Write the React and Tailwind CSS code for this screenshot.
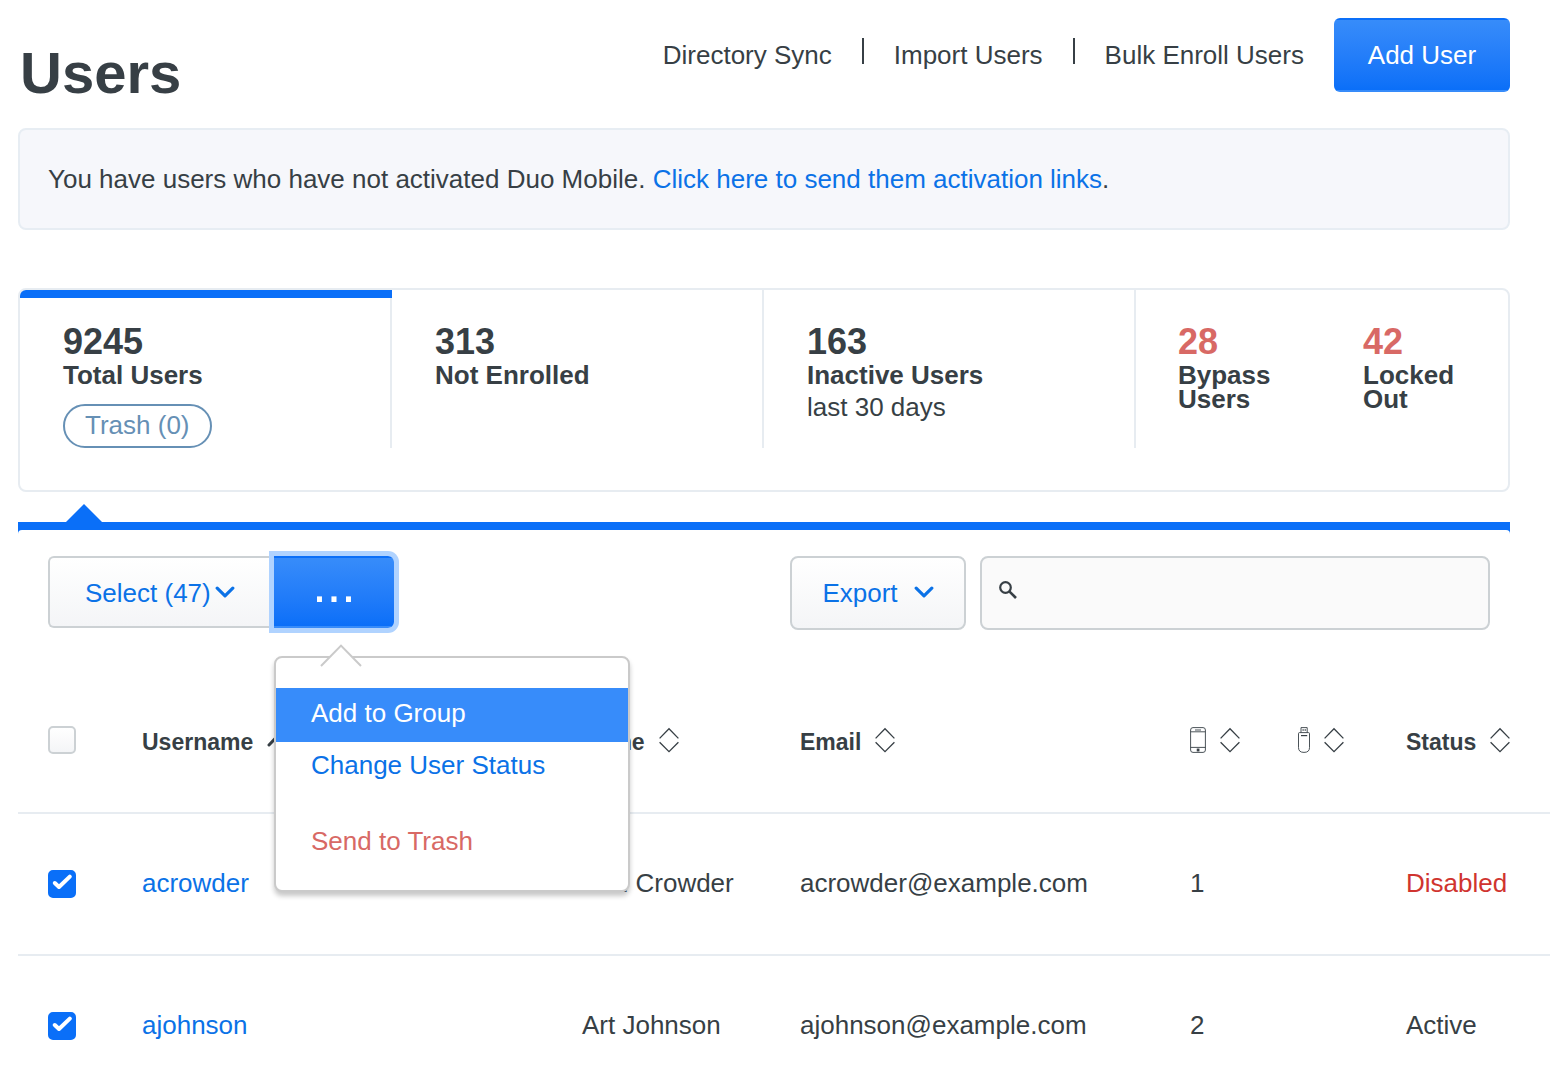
import React, { useState } from 'react';

const USERS = [
    { username: 'acrowder', name: 'Ann Crowder', email: 'acrowder@example.com', phones: 1, status: 'Disabled' },
    { username: 'ajohnson', name: 'Art Johnson', email: 'ajohnson@example.com', phones: 2, status: 'Active' },
];

const Chevron = () => (
    <svg width="20" height="14" viewBox="0 0 20 14" fill="none" stroke="currentColor" strokeWidth="3.2" strokeLinecap="round" strokeLinejoin="round" aria-hidden="true">
        <path d="M2.2 2.2 L10 9.8 L17.8 2.2" />
    </svg>
);

const SortIcon = () => (
    <svg width="20" height="26" viewBox="0 0 20 26" fill="none" stroke="currentColor" strokeWidth="1.3" aria-hidden="true">
        <path d="M0.6 11.4 L10 1.8 L19.4 11.4 M0.6 15.2 L10 24.6 L19.4 15.2" />
    </svg>
);

const SortUpIcon = () => (
    <svg width="20" height="16" viewBox="0 0 20 16" fill="none" stroke="currentColor" strokeWidth="3" strokeLinecap="round" strokeLinejoin="round" aria-hidden="true">
        <path d="M2 13 L10 4.6 L18 13" />
    </svg>
);

const PhoneIcon = () => (
    <svg width="16" height="26" viewBox="0 0 16 26" fill="none" stroke="currentColor" strokeWidth="0.9" aria-hidden="true">
        <rect x="0.6" y="0.6" width="14.8" height="24.8" rx="2.4" />
        <path d="M0.6 4.8 H15.4 M0.6 20.4 H15.4 M5 3 H11" />
        <rect x="7.2" y="22" width="1.8" height="2" fill="currentColor" />
    </svg>
);

const TokenIcon = () => (
    <svg className="ml-0.5" width="12" height="26" viewBox="0 0 12 26" fill="none" stroke="currentColor" strokeWidth="0.9" aria-hidden="true">
        <path d="M3 5.6 V0.6 H9.2 V5.6 M5.1 2 V4 M7.2 2 V4" />
        <path d="M1.4 5.6 H10.6 Q11.5 5.6 11.5 6.6 V20.6 Q11.5 25.4 6 25.4 Q0.5 25.4 0.5 20.6 V6.6 Q0.5 5.6 1.4 5.6 Z" />
        <path d="M3 8.6 H9.2" strokeWidth="1.2" />
    </svg>
);

const Checkbox = ({ label, checked, onChange }) => (
    <label className="grid w-7">
        <input
            type="checkbox"
            aria-label={label}
            checked={checked}
            onChange={onChange}
            className="peer col-start-1 row-start-1 size-7 appearance-none rounded-[5px] border-2 border-[#ccd1d4] bg-linear-to-b from-white to-[#f4f5f7] checked:border-[#0a6ff8] checked:from-[#0a6ff8] checked:to-[#0a6ff8]"
        />
        <svg className="invisible pointer-events-none col-start-1 row-start-1 size-7 text-white peer-checked:visible" viewBox="0 0 28 28" fill="none" stroke="currentColor" strokeWidth="4" strokeLinecap="round" strokeLinejoin="round" aria-hidden="true">
            <path d="M6.8 13 L11 17 L21.8 6.6" />
        </svg>
    </label>
);

const Stat = ({ value, label, danger, children }) => (
    <div>
        <div className={`text-4xl leading-[42px] font-bold ${danger ? 'text-[#d86965]' : ''}`}>{value}</div>
        <div className="leading-6 font-bold">{label}</div>
        {children}
    </div>
);

const SortableHeader = ({ children, label }) => (
    <th scope="col" className="p-0 text-left">
        <button type="button" aria-label={label} className="flex items-center gap-3.5 text-[23px] font-bold">
            {label ? children : <span className="pt-1">{children}</span>}
            <SortIcon />
        </button>
    </th>
);

const App = () => {
    const [selected, setSelected] = useState(['acrowder', 'ajohnson']);
    const [search, setSearch] = useState('');

    const toggle = (username) => {
        setSelected(prev => prev.includes(username) ? prev.filter(u => u !== username) : [...prev, username]);
    };

    return (
        <div className="overflow-x-hidden bg-white pl-[18px] font-['Liberation_Sans',Arial,sans-serif] text-[26px] leading-[30px] text-[#373f45]">
            <div className="pr-10">
                <header className="flex items-start justify-between pt-[18px]">
                    <h1 className="pt-[26px] pb-[26px] pl-0.5 text-[58px] leading-[58px] font-bold">Users</h1>
                    <nav className="flex h-[74px] items-center gap-[30px]">
                        <a href="#sync">Directory Sync</a>
                        <span className="mb-2 h-[26px] w-0.5 bg-[#373f45]" />
                        <a href="#import">Import Users</a>
                        <span className="mb-2 h-[26px] w-0.5 bg-[#373f45]" />
                        <a href="#bulk">Bulk Enroll Users</a>
                        <button type="button" className="h-full w-44 rounded-md border-2 border-transparent bg-linear-to-b from-[#378cfa] to-[#0a6ff8] text-white">
                            Add User
                        </button>
                    </nav>
                </header>

                <div className="rounded-lg border-2 border-[#e7edf3] bg-[#f6f7fb] px-7 py-[34px]">
                    You have users who have not activated Duo Mobile.{' '}
                    <a href="#activate" className="text-[#0b72e7]">Click here to send them activation links</a>.
                </div>

                <section className="mt-[58px] grid grid-cols-4 rounded-lg border-2 border-[#e7ecf1] pb-[42px]">
                    <div className="relative border-r-2 border-[#e7ecf1] pt-[31px] pl-[43px]">
                        <div className="absolute top-0 left-0 -right-0.5 h-2 rounded-tl-md bg-[#0a6ff8]" />
                        <Stat value="9245" label="Total Users">
                            <button type="button" className="mt-[17px] h-11 rounded-full border-2 border-[#6690b5] px-5 pb-0.5 text-[#6690b5]">Trash (0)</button>
                        </Stat>
                    </div>
                    <div className="border-r-2 border-[#e7ecf1] pt-[31px] pl-[43px]">
                        <Stat value="313" label="Not Enrolled" />
                    </div>
                    <div className="border-r-2 border-[#e7ecf1] pt-[31px] pl-[43px]">
                        <Stat value="163" label="Inactive Users">
                            <div className="mt-1 leading-8">last 30 days</div>
                        </Stat>
                    </div>
                    <div className="grid grid-cols-2 gap-10 pt-[31px] pl-[42px]">
                        <Stat value="28" label={<>Bypass<br />Users</>} danger />
                        <Stat value="42" label={<>Locked<br />Out</>} danger />
                    </div>
                </section>

                <svg className="mt-3 ml-12 block text-[#0a6ff8]" width="36" height="18" viewBox="0 0 36 18" fill="currentColor" aria-hidden="true">
                    <path d="M0 18 L18 0 L36 18 Z" />
                </svg>
                <div className="bg-[#0a6ff8] pt-2">
                    <div className="flex items-start justify-between rounded-t bg-white pt-[26px] pr-5 pb-[38px] pl-[30px]">
                        <div className="relative flex h-[72px]">
                            <button type="button" className="flex w-[226px] items-center gap-1 rounded-l-md border-2 border-r-0 border-[#ccd1d4] bg-linear-to-b from-white to-[#f4f5f7] pt-0.5 pl-[35px] text-[#0b72e7]">
                                Select (47) <Chevron />
                            </button>
                            <button type="button" aria-label="Actions" aria-expanded="true" className="w-[120px] rounded-r-md border-y-2 border-transparent bg-linear-to-b from-[#378cfa] to-[#0a6ff8] pb-4 text-[52px] leading-none text-white ring-5 ring-[#b0d3ff]">
                                ...
                            </button>

                            <div className="absolute top-[100px] left-[226px] z-10 w-[356px] rounded-lg border-2 border-[#cacaca] bg-white pt-[30px] pb-[26px] shadow-[0_4px_5px_rgba(0,0,0,0.22)]">
                                <svg className="absolute -top-3.5 left-11" width="42" height="23" viewBox="0 0 42 23" aria-hidden="true">
                                    <path d="M1 22 L21 1.6 L41 22 Z" fill="white" />
                                    <path d="M1 22 L21 1.6 L41 22" fill="none" stroke="#cacaca" strokeWidth="2" />
                                </svg>
                                <button type="button" className="block w-full bg-[#378cfa] pb-1 pl-[35px] text-left leading-[50px] text-white">Add to Group</button>
                                <button type="button" className="block w-full pl-[35px] text-left leading-[46px] text-[#0b72e7]">Change User Status</button>
                                <button type="button" className="mt-[30px] block w-full pl-[35px] text-left leading-[46px] text-[#d86965]">Send to Trash</button>
                            </div>
                        </div>

                        <div className="flex h-[74px] gap-3.5">
                            <button type="button" className="flex w-44 items-center justify-center gap-4 rounded-lg border-2 border-[#ccd1d4] bg-linear-to-b from-white to-[#f4f5f7] text-[#0b72e7]">
                                Export <Chevron />
                            </button>
                            <label className="flex w-[510px] items-center gap-3 rounded-lg border-2 border-[#ccd1d4] bg-[#fafafa] px-4">
                                <svg className="mb-1.5" width="20" height="20" viewBox="0 0 20 20" fill="none" stroke="currentColor" aria-hidden="true">
                                    <circle cx="7.5" cy="7.5" r="5.3" strokeWidth="2.2" />
                                    <path d="M11.3 11.3 L18 18" strokeWidth="2.6" />
                                </svg>
                                <input type="search" aria-label="Search users" value={search} onChange={(e) => setSearch(e.target.value)} className="min-w-0 flex-1 bg-transparent outline-none" />
                            </label>
                        </div>
                    </div>
                </div>
            </div>

            <table className="w-full table-fixed border-collapse">
                <colgroup>
                    <col className="w-[124px]" />
                    <col />
                    <col className="w-[218px]" />
                    <col className="w-[390px]" />
                    <col className="w-[106px]" />
                    <col className="w-[110px]" />
                    <col className="w-36" />
                </colgroup>
                <thead>
                    <tr className="h-[145px] border-b-2 border-[#e7ecf1]">
                        <th scope="col" className="p-0 pl-[30px]">
                            <Checkbox label="Select all" checked={false} onChange={() => setSelected(USERS.map(u => u.username))} />
                        </th>
                        <th scope="col" className="p-0 text-left">
                            <button type="button" className="flex items-center gap-3.5 text-[23px] font-bold">
                                <span className="pt-1">Username</span>
                                <SortUpIcon />
                            </button>
                        </th>
                        <SortableHeader>Name</SortableHeader>
                        <SortableHeader>Email</SortableHeader>
                        <SortableHeader label="Phones"><PhoneIcon /></SortableHeader>
                        <SortableHeader label="Tokens"><TokenIcon /></SortableHeader>
                        <SortableHeader>Status</SortableHeader>
                    </tr>
                </thead>
                <tbody>
                    {USERS.map((user) => (
                        <tr key={user.username} className="h-[142px] border-b-2 border-[#e7ecf1]">
                            <td className="p-0 pl-[30px]">
                                <Checkbox label={`Select ${user.username}`} checked={selected.includes(user.username)} onChange={() => toggle(user.username)} />
                            </td>
                            <td className="p-0 pb-0.5">
                                <a href={`#${user.username}`} className="text-[#0b72e7]">{user.username}</a>
                            </td>
                            <td className="p-0 pb-0.5">{user.name}</td>
                            <td className="p-0 pb-0.5">{user.email}</td>
                            <td className="p-0 pb-0.5">{user.phones}</td>
                            <td className="p-0" />
                            <td className={user.status === 'Disabled' ? 'p-0 pb-0.5 text-[#d0342f]' : 'p-0 pb-0.5'}>{user.status}</td>
                        </tr>
                    ))}
                </tbody>
            </table>
        </div>
    );
};

export default App;
